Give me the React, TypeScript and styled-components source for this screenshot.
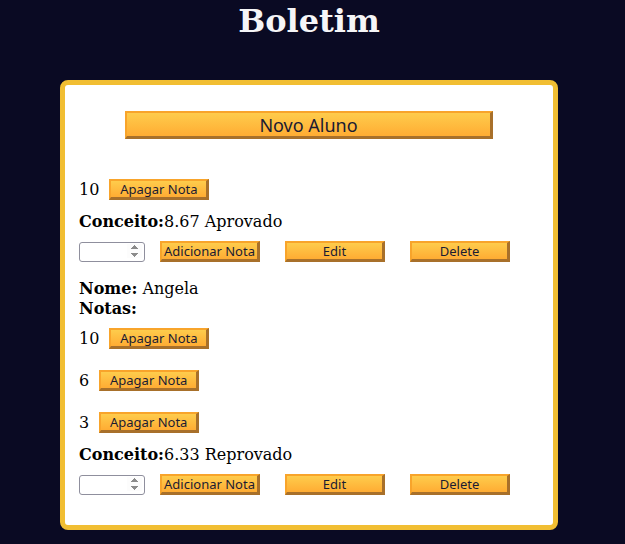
import React from 'react';
import styled, { createGlobalStyle } from 'styled-components';

interface IStudent {
  name?: string;
  notes: number[];
  average: string;
  status: string;
}

const students: IStudent[] = [
  { notes: [10], average: '8.67', status: 'Aprovado' },
  { name: 'Angela', notes: [10, 6, 3], average: '6.33', status: 'Reprovado' },
];

export default function App() {
  return (
    <Page>
      <GlobalStyle />
      <Title>Boletim</Title>
      <Card>
        <NewButton>Novo Aluno</NewButton>
        {students.map((student, i) => (
          <Student key={i} {...student} />
        ))}
      </Card>
    </Page>
  );
}

function Student({ name, notes, average, status }: IStudent) {
  return (
    <StudentBlock>
      {name && (
        <>
          <Line>
            <b>Nome:</b> {name}
          </Line>
          <Line>
            <b>Notas:</b>
          </Line>
        </>
      )}
      <NoteList>
        {notes.map((note, i) => (
          <NoteRow key={i}>
            <span>{note}</span>
            <SmallButton>Apagar Nota</SmallButton>
          </NoteRow>
        ))}
      </NoteList>
      <Concept>
        <b>Conceito:</b>
        {average} {status}
      </Concept>
      <Actions>
        <NoteInput type="number" />
        <ActionButton>Adicionar Nota</ActionButton>
        <ActionButton>Edit</ActionButton>
        <ActionButton>Delete</ActionButton>
      </Actions>
    </StudentBlock>
  );
}

const GlobalStyle = createGlobalStyle`
  html, body {
    margin: 0;
    background-color: #0a0a23;
  }
  body {
    font-family: 'DejaVu Serif', serif;
    font-size: 16px;
    color: #000;
  }
`;

const Page = styled.div`
  width: 618px;
  min-height: 544px;
  display: flex;
  flex-direction: column;
  align-items: center;
`;

const Title = styled.h1`
  margin: 1px 0 39px;
  font-family: 'DejaVu Serif', serif;
  font-size: 32px;
  line-height: 40px;
  font-weight: bold;
  color: #f5f5f7;
`;

const Card = styled.div`
  width: 498px;
  box-sizing: border-box;
  background-color: #fff;
  border: 5px solid #f1be32;
  border-radius: 8px;
  padding: 26px 14px 30px;
  display: flex;
  flex-direction: column;
`;

const Button = styled.button`
  font-family: 'Noto Sans', 'Open Sans', sans-serif;
  color: #1b1b32;
  background: linear-gradient(#fecc4c, #ffac33);
  border-style: solid;
  border-width: 2px 3px 3px 2px;
  border-color: #f8a42b #a8702a #a8702a #f8a42b;
  padding: 0;
  cursor: pointer;
  display: flex;
  align-items: center;
  justify-content: center;
`;

const NewButton = styled(Button)`
  width: 80%;
  height: 28px;
  align-self: center;
  font-size: 18px;
  margin-bottom: 14px;
`;

const SmallButton = styled(Button)`
  width: 100px;
  height: 21px;
  font-size: 13px;
`;

const ActionButton = styled(SmallButton)`
  & + & {
    margin-left: 25px;
  }
`;

const StudentBlock = styled.div`
  margin-top: 16px;
  display: flex;
  flex-direction: column;
`;

const Line = styled.div`
  line-height: 20px;
  padding-top: 1px;
  margin-bottom: -1px;
`;

const NoteList = styled.div`
  margin-top: 10px;
  display: flex;
  flex-direction: column;
  gap: 21px;
`;

const NoteRow = styled.div`
  height: 21px;
  display: flex;
  align-items: center;
  gap: 10px;
`;

const Concept = styled(Line)`
  margin-top: 11px;
`;

const Actions = styled.div`
  margin-top: 10px;
  display: flex;
  align-items: center;
`;

const NoteInput = styled.input`
  width: 66px;
  height: 20px;
  box-sizing: border-box;
  margin: 0 15px 0 0;
  border: 1px solid #8f8f9d;
  border-radius: 3px;
  font-size: 13px;

  &::-webkit-inner-spin-button {
    opacity: 1;
  }
`;
